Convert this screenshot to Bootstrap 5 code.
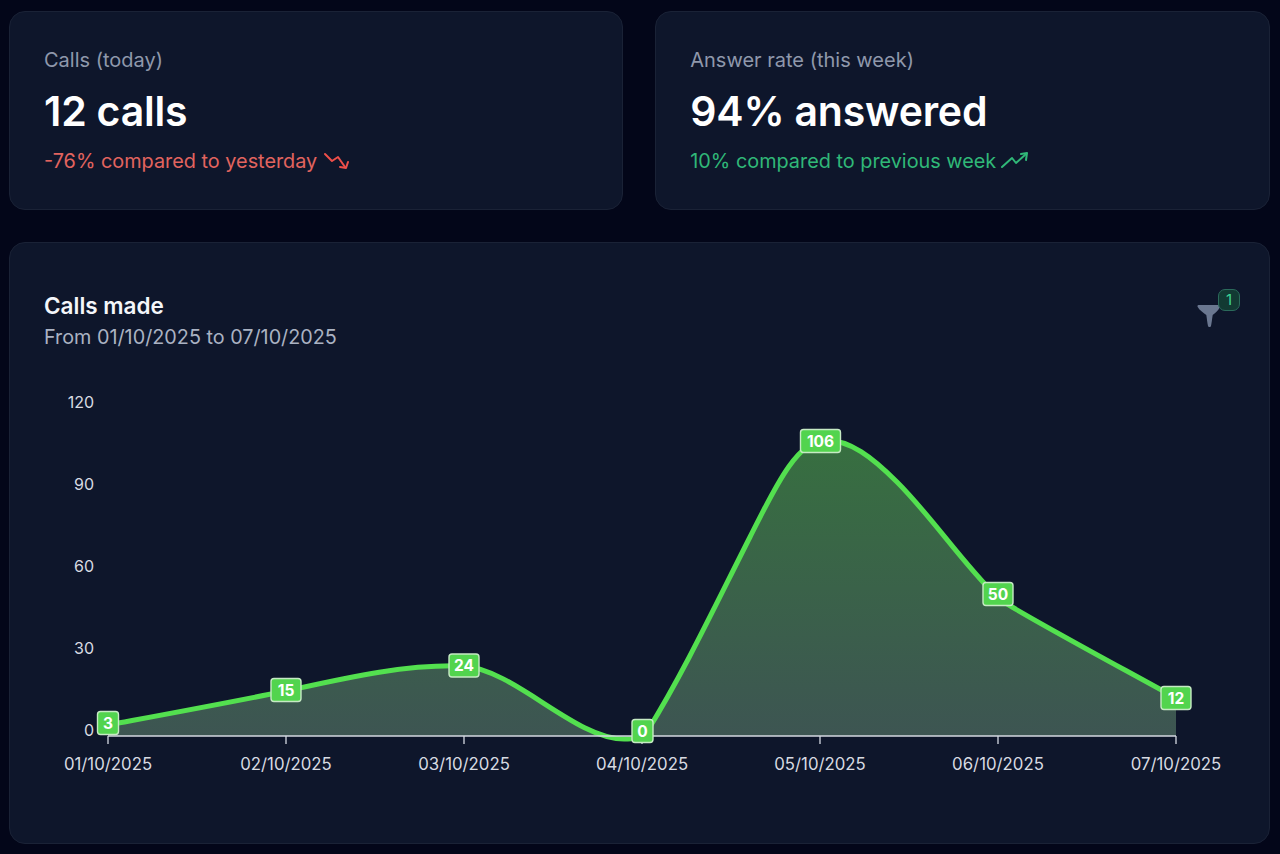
<!DOCTYPE html>
<html lang="en">
<head>
<meta charset="utf-8">
<title>Calls dashboard</title>
<link href="https://cdn.jsdelivr.net/npm/bootstrap@5.3.0/dist/css/bootstrap.min.css" rel="stylesheet">
<style>
html,body{height:100%}
body{background:#030619;font-family:"Inter","Liberation Sans",sans-serif;overflow:hidden}
.page-wrap{padding:11px 10.500px 0 9px}
.stat-row{--bs-gutter-x:32px;--bs-gutter-y:32px}
.panel{background:#0e162b;border:1px solid #1a2236;border-radius:16px;color:#fff}
.stat-panel{height:199px;padding:35px 34px}
.stat-label{font-size:20px;line-height:28px;color:#8f98ab;margin-top:-1px}
.stat-value{font-size:41px;line-height:48px;font-weight:600;margin-top:13px;letter-spacing:-.2px}
.stat-delta{font-size:19.850px;line-height:26px;margin-top:13px;display:flex;align-items:center}
.delta-down{color:#e2645f}
.delta-up{color:#30b878}
.delta-down .delta-icon{color:#ee4f4a}
.delta-icon{width:28px;height:20px;margin-left:5px}
.chart-panel{height:602px;position:relative}
.chart-head{padding:48px 34px 0}
.chart-title{font-size:22.500px;line-height:30px;font-weight:600;color:#f4f6fa;margin:0}
.chart-sub{font-size:19.800px;line-height:28px;color:#aab2c2;margin-top:2px}
.filter-btn{position:absolute;left:1187px;top:59px;width:25px;height:24px;padding:0;border:0;background:none}
.filter-badge{position:absolute;left:21px;top:-13px;width:22px;height:22px;border-radius:7px;background:#123a33;border:1px solid #2b6a5b;color:#3ed795;font-size:15px;line-height:20px;text-align:center}
.chart-svg{position:absolute;left:-1px;top:-1px;width:1260px;height:601px}
.chart-svg text{font-family:"Inter","Liberation Sans",sans-serif}
.tick-y{font-size:16px;fill:#d8dbe2}
.tick-x{font-size:16.800px;fill:#d8dbe2}
.pt{font-size:15.500px;font-weight:700;fill:#fff}
</style>
</head>
<body>
<div class="page-wrap">
  <div class="row stat-row">
    <div class="col-6">
      <div class="panel stat-panel">
        <div class="stat-label">Calls (today)</div>
        <div class="stat-value">12 calls</div>
        <div class="stat-delta delta-down">-76% compared to yesterday<svg class="delta-icon" viewBox="0 0 28 20" fill="none" stroke="currentColor" stroke-width="2" stroke-linecap="round" stroke-linejoin="round"><path d="M3 3l7 7 6-4 7 10"/><path d="M26 11l-2 6-6-1"/></svg></div>
      </div>
    </div>
    <div class="col-6">
      <div class="panel stat-panel">
        <div class="stat-label">Answer rate (this week)</div>
        <div class="stat-value">94% answered</div>
        <div class="stat-delta delta-up">10% compared to previous week<svg class="delta-icon" viewBox="0 0 28 20" fill="none" stroke="currentColor" stroke-width="2" stroke-linecap="round" stroke-linejoin="round"><path d="M1 16l10-9 4 5L25 3"/><path d="M20 3l6-1-1 7"/></svg></div>
      </div>
    </div>
    <div class="col-12">
      <div class="panel chart-panel">
        <svg class="chart-svg" viewBox="9 242 1260 601">
          <defs>
            <linearGradient id="areaFill" x1="0" y1="441" x2="0" y2="736" gradientUnits="userSpaceOnUse">
              <stop offset="0" stop-color="#376f40"/>
              <stop offset="1" stop-color="#3d5552"/>
            </linearGradient>
          </defs>
          <path fill="url(#areaFill)" d="M108 725C167 714 227 703 286 691C345 678 405 664 464 666C515 670 575 739 624 739C632 739 640 739 648 730C684 672 716 604 750 537C772 494 796 440 825 440C850 440 872 457 897 482C932 517 960 560 998 598C1010 608 1120 667 1176 698V736H108Z"/>
          <path fill="none" stroke="#53e04f" stroke-width="5" stroke-linecap="round" d="M108 725C167 714 227 703 286 691C345 678 405 664 464 666C515 670 575 739 624 739C632 739 640 739 648 730C684 672 716 604 750 537C772 494 796 440 825 440C850 440 872 457 897 482C932 517 960 560 998 598C1010 608 1120 667 1176 698"/>
          <g stroke="#d5d9e2" stroke-width="1.3" fill="none">
            <path d="M108 736H1176"/>
            <path d="M108 736v8M286 736v8M464 736v8M642 736v8M820 736v8M998 736v8M1176 736v8"/>
          </g>
          <g class="tick-y" text-anchor="end">
            <text x="94" y="408">120</text>
            <text x="94" y="490">90</text>
            <text x="94" y="572">60</text>
            <text x="94" y="654">30</text>
            <text x="94" y="736">0</text>
          </g>
          <g class="tick-x" text-anchor="middle">
            <text x="108" y="770">01/10/2025</text>
            <text x="286" y="770">02/10/2025</text>
            <text x="464" y="770">03/10/2025</text>
            <text x="642" y="770">04/10/2025</text>
            <text x="820" y="770">05/10/2025</text>
            <text x="998" y="770">06/10/2025</text>
            <text x="1176" y="770">07/10/2025</text>
          </g>
          <g fill="#52d44e" stroke="#c6eac4" stroke-width="1.400">
            <rect x="97.500" y="711.500" width="21" height="23" rx="3"/>
            <rect x="271" y="678.500" width="30" height="23" rx="3"/>
            <rect x="449" y="654" width="30" height="23" rx="3"/>
            <rect x="632" y="719.500" width="21" height="23" rx="3"/>
            <rect x="800.500" y="429.500" width="40" height="23" rx="3"/>
            <rect x="983" y="582.500" width="30" height="23" rx="3"/>
            <rect x="1161" y="686.500" width="30" height="23" rx="3"/>
          </g>
          <g class="pt" text-anchor="middle">
            <text x="108" y="728.500">3</text>
            <text x="286" y="695.500">15</text>
            <text x="464" y="671">24</text>
            <text x="642.500" y="736.500">0</text>
            <text x="820.500" y="446.500">106</text>
            <text x="998" y="599.500">50</text>
            <text x="1176" y="703.500">12</text>
          </g>
        </svg>
        <div class="chart-head position-relative">
          <h2 class="chart-title">Calls made</h2>
          <div class="chart-sub">From 01/10/2025 to 07/10/2025</div>
        </div>
        <button type="button" class="filter-btn" aria-label="Filter">
          <svg width="25" height="24" viewBox="0 0 25 24"><path fill="#6a7790" d="M1.500 1h20c1.500 0 2 1 1.200 2.500-1.500 3-4.700 5.500-7 7.500-.7 4-1 8-1.700 11-.3 1.200-2.500 1.500-3 0-.7-3-1-7-1.700-11C7 9 2.500 6.500 .7 3 .2 2 .5 1 1.500 1Z"/></svg>
          <span class="filter-badge">1</span>
        </button>
      </div>
    </div>
  </div>
</div>
<script src="https://cdn.jsdelivr.net/npm/bootstrap@5.3.0/dist/js/bootstrap.bundle.min.js"></script>
</body>
</html>
